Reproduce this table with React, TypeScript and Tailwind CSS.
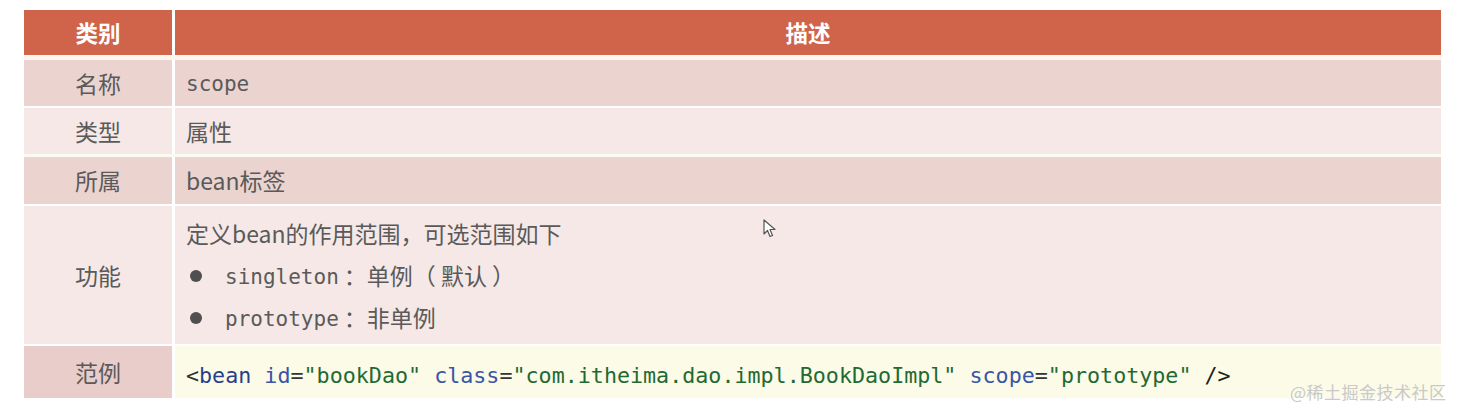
import React from "react";

const cjk = "font-['Microsoft_YaHei','Noto_Sans_CJK_SC',sans-serif]";
const mono = "font-['DejaVu_Sans_Mono','Noto_Sans_CJK_SC',monospace]";

const Row = ({ label, h, left, right, children }: { label: string; h: string; left: string; right: string; children: React.ReactNode }) => (
  <div className={`flex gap-[3px] ${h}`}>
    <div className={`w-[148px] shrink-0 flex items-center justify-center ${left}`}>{label}</div>
    <div className={`flex-1 flex items-center pl-[11px] ${right}`}>{children}</div>
  </div>
);

const Bullet = ({ children }: { children: React.ReactNode }) => (
  <div className="flex items-center h-[42px]">
    <span className="w-[12px] h-[12px] rounded-full bg-[#4f4f4f] ml-[4px] mr-[23px]" />
    {children}
  </div>
);

export default function App() {
  return (
    <div className={`relative w-[1466px] h-[416px] bg-white pt-[10px] pl-[24px] text-[#5a5a5a] text-[23px] ${cjk}`}>
      <div className="w-[1417px] flex flex-col">
        <div className="flex gap-[3px] h-[45px] text-white font-bold text-[22.5px]">
          <div className="w-[148px] shrink-0 flex items-center justify-center bg-[#d0644a]">类别</div>
          <div className="flex-1 flex items-center justify-center bg-[#d0644a]">描述</div>
        </div>
        <div className="h-[5px] bg-[#fdf6ef]" />
        <Row label="名称" h="h-[46px]" left="bg-[#ebd3d0]" right="bg-[#ebd3d0]">
          <span className={`${mono} text-[21px] relative top-[2px]`}>scope</span>
        </Row>
        <div className="h-[2px]" />
        <Row label="类型" h="h-[46px]" left="bg-[#f5e8e6]" right="bg-[#f5e8e6]">属性</Row>
        <div className="h-[3px] bg-[#fbfaf0]" />
        <Row label="所属" h="h-[47px]" left="bg-[#ebd3d0]" right="bg-[#ebd3d0]">bean标签</Row>
        <div className="h-[2px]" />
        <Row label="功能" h="h-[138px]" left="bg-[#f5e8e6]" right="bg-[#f5e8e6]">
          <div className="flex flex-col pt-[1px]">
            <div className="h-[42px] flex items-center">定义bean的作用范围，可选范围如下</div>
            <Bullet>
              <span className={`${mono} text-[21px] relative top-[2px]`}>singleton</span>
              <span className="ml-[5px]">：单例（ 默认 ）</span>
            </Bullet>
            <Bullet>
              <span className={`${mono} text-[21px] relative top-[2px]`}>prototype</span>
              <span className="ml-[5px]">：非单例</span>
            </Bullet>
          </div>
        </Row>
        <div className="h-[2px]" />
        <Row label="范例" h="h-[52px]" left="bg-[#e8cdca]" right="bg-[#fcfbe7]">
          <span className={`${mono} text-[21.7px] whitespace-pre relative top-[4px]`}>
            <span className="text-[#333]">&lt;</span>
            <span className="text-[#2a3e8c]">bean</span>{" "}
            <span className="text-[#3a55a8]">id</span>
            <span className="text-[#333]">=</span>
            <span className="text-[#1f6a34]">"bookDao"</span>{" "}
            <span className="text-[#3a55a8]">class</span>
            <span className="text-[#333]">=</span>
            <span className="text-[#1f6a34]">"com.itheima.dao.impl.BookDaoImpl"</span>{" "}
            <span className="text-[#3a55a8]">scope</span>
            <span className="text-[#333]">=</span>
            <span className="text-[#1f6a34]">"prototype"</span>{" "}
            <span className="text-[#222]">/&gt;</span>
          </span>
        </Row>
      </div>

      {/* mouse pointer */}
      <svg className="absolute left-[763px] top-[219px]" width="14" height="20" viewBox="0 0 14 20">
        <path d="M1 1 L1 15 L4.5 11.5 L7 17.5 L9.5 16.5 L7 10.5 L12 10.5 Z" fill="#fff" stroke="#555" strokeWidth="1.2" strokeLinejoin="round" />
      </svg>

      <div className="absolute left-[1290px] top-[379px] text-[17px] text-[#c9c9c9] tracking-[0.5px]">@稀土掘金技术社区</div>
    </div>
  );
}
